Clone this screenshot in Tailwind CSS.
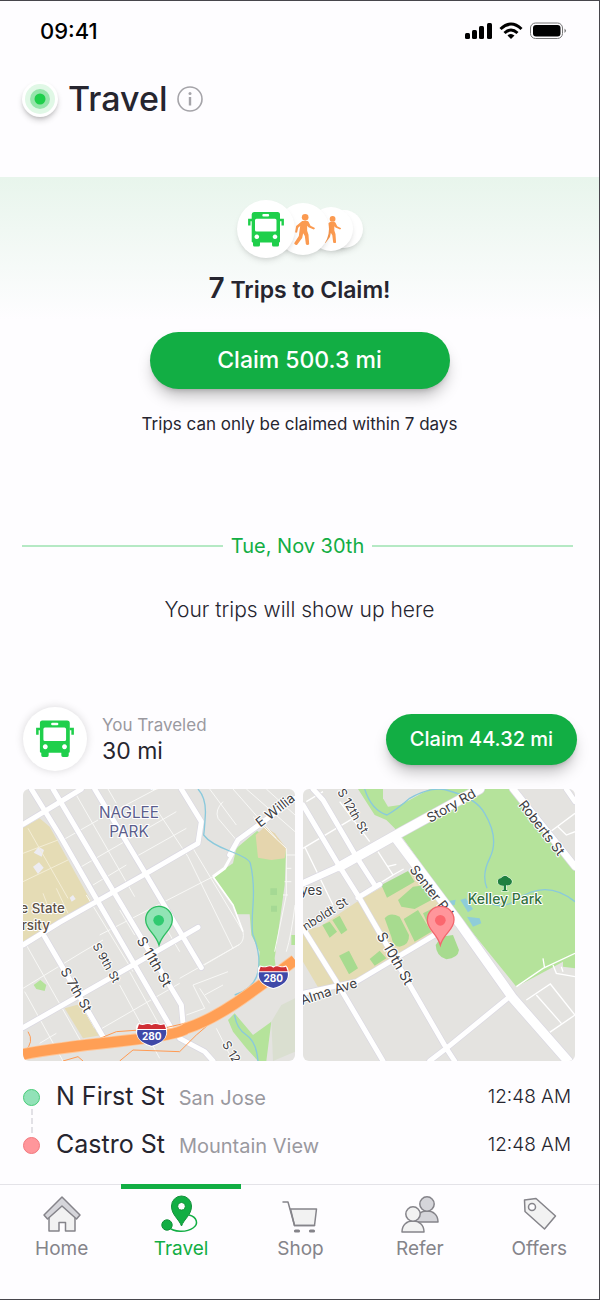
<!DOCTYPE html>
<html lang="en">
<head>
  <meta charset="UTF-8">
  <meta name="viewport" content="width=device-width, initial-scale=1.0">
  <title>Travel</title>
  <script src="https://cdn.jsdelivr.net/npm/@tailwindcss/browser@4"></script>
</head>
<body class="bg-[#fefdff] text-[#26252f] font-['Inter',sans-serif]">

  <!-- Shared icons -->
  <svg class="hidden" aria-hidden="true">
    <symbol id="bus" viewBox="0 0 36 35">
      <path fill="#1fcf4b" fill-rule="evenodd" d="M6 0h23.500q2.500 0 2.500 2.500V29.500q0 1-1 1v2.500q0 1.500-1.500 1.500h-4q-1.500 0-1.500-1.500v-2.500H12v2.500q0 1.500-1.500 1.500h-4q-1.500 0-1.500-1.500v-2.500q-1.300 0-1.300-1V2.500Q3.700 0 6 0ZM8.500 6.700Q7 6.700 7 8.200V18q0 1.500 1.500 1.500h18.500q1.500 0 1.500-1.500V8.200q0-1.500-1.500-1.500ZM15.500 2a1 1 0 0 0 0 2.400h4.500a1 1 0 0 0 0-2.400ZM8.800 22.500a2.300 2.300 0 1 0 .01 0ZM27 22.500a2.300 2.300 0 1 0 .01 0Z"/>
      <path fill="none" stroke="#1fcf4b" stroke-width="2.400" d="M4 8H1.300V13.500M31.800 8h2.900V13.500"/>
    </symbol>
    <symbol id="walk" viewBox="0 0 62 93">
      <circle cx="33" cy="10" r="10" fill="#fb9a50"/>
      <path fill="#fb9a50" d="M24 21h15q3 0 5 4l5 10 12 6q2 2 0 4t-4 1l-14-6-4-5v15l4 12 2 28q-1 3-5 3t-5-3l-3-24-5-8-3 14-15 20q-4 2-7-1t-1-5l13-20 4-30-6 5-3 14q-2 2-4 1t-2-3l3-17Z"/>
    </symbol>
    <symbol id="shield" viewBox="0 0 96 72">
      <path fill="#fff" d="M8 0q12 6 22 1 10-4 18 2 10-6 18-2 10 5 20-1l6 8q4 14 2 26Q88 60 48 72 8 60 2 34 0 22 2 8Z"/>
      <path fill="#cf2f35" d="M10 4q12 4 20 0 10-3 18 3 8-6 18-3 8 4 20 0l5 14H5Z"/>
      <path fill="#3f49a8" d="M5 21h86q6 34-43 47Q-1 55 5 21Z"/>
      <text x="48" y="51" text-anchor="middle" font-size="30" font-weight="700" fill="#fff">280</text>
    </symbol>
  </svg>

  <div class="min-h-screen flex flex-col border-t border-r border-b border-[#47464c]">

    <!-- Status bar -->
    <div class="h-15 pl-10 pr-8 flex items-center justify-between text-black">
      <span class="text-[22px] font-medium">09:41</span>
      <svg class="w-[103px] h-5" viewBox="0 0 103 20" aria-hidden="true">
        <rect x="1" y="12" width="5" height="6" rx="1.500"/>
        <rect x="8" y="9" width="5" height="9" rx="1.500"/>
        <rect x="15" y="5" width="5" height="13" rx="1.500"/>
        <rect x="23" y="2" width="5" height="16" rx="1.500"/>
        <g fill="none" stroke="#000" stroke-width="3">
          <path d="M36.500 8Q47-2 57.500 8"/>
          <path d="M40.500 12Q47 6 53.500 12"/>
        </g>
        <path d="M43.500 14.500Q47 11.500 50.500 14.500L47 18Z"/>
        <rect x="66.500" y="2" width="32" height="15.500" rx="5" fill="none" stroke="#777"/>
        <rect x="69" y="4" width="27.500" height="11.500" rx="3"/>
        <path d="M100.500 7.500q3 2.300 0 4.500Z" fill="#777"/>
      </svg>
    </div>

    <!-- Title -->
    <header class="h-[116px] pt-3 pl-[22px] flex items-start">
      <div class="flex items-center gap-2.5">
        <span class="size-9 rounded-full bg-white shadow-md shadow-black/20 grid place-items-center">
          <svg class="size-8" viewBox="0 0 32 32" aria-hidden="true">
            <circle cx="16" cy="16" r="15" fill="#e0f8e6"/>
            <circle cx="16" cy="16" r="10" fill="#96e5ab"/>
            <circle cx="16" cy="16" r="5.500" fill="#1fcf4b"/>
          </svg>
        </span>
        <h1 class="text-[34px] leading-[52px] font-medium">Travel</h1>
        <button type="button" aria-label="Information">
          <svg class="size-[26px]" viewBox="0 0 26 26" fill="none" stroke="#a5a4a9" stroke-width="1.600">
            <circle cx="13" cy="13" r="12"/>
            <path stroke-width="2.400" d="M13 11v8.500"/>
            <circle cx="13" cy="7.500" r="1.500" fill="#a5a4a9" stroke="none"/>
          </svg>
        </button>
      </div>
    </header>

    <!-- Trips to claim -->
    <section class="flex flex-col items-center">
      <div class="w-full h-[143px] pt-[23px] bg-linear-to-b from-[#e8f5ec] to-[#fefdff] flex flex-col items-center">
        <div class="flex items-center">
          <span class="relative z-30 size-[58px] rounded-full bg-white shadow-md grid place-items-center">
            <svg class="w-9 h-[35px]" aria-label="Bus"><use href="#bus"/></svg>
          </span>
          <span class="relative z-20 size-[52px] -ml-[18px] pl-1 rounded-full bg-white shadow-md grid place-items-center">
            <svg class="w-[21px] h-[31px]" aria-label="Walk"><use href="#walk"/></svg>
          </span>
          <span class="relative z-10 size-11 -ml-5 pl-0.5 rounded-full bg-white shadow-md grid place-items-center">
            <svg class="w-[18px] h-[27px]" aria-label="Walk"><use href="#walk"/></svg>
          </span>
          <span class="size-[38px] -ml-7 rounded-full bg-white shadow-md"></span>
        </div>
        <h2 class="mt-3 text-[23px] leading-9 font-semibold"><span class="text-[28px]">7</span> Trips to Claim!</h2>
      </div>
      <button type="button" class="mt-3 w-[300px] h-[57px] rounded-full bg-[#12ae44] text-white text-[23px] font-medium shadow-lg shadow-black/25">Claim 500.3 mi</button>
      <p class="mt-[23px] text-[17px] leading-6">Trips can only be claimed within 7 days</p>
    </section>

    <!-- Day -->
    <section class="mt-24 px-[22px]">
      <div class="flex items-center gap-2 pr-1">
        <span class="h-0.5 grow bg-[#b5e9c4]"></span>
        <h2 class="text-xl leading-7 text-[#12ae44]">Tue, Nov 30th</h2>
        <span class="h-0.5 grow bg-[#b5e9c4]"></span>
      </div>
      <p class="mt-9 text-[21px] leading-7 font-light text-center">Your trips will show up here</p>
    </section>

    <!-- Trip -->
    <article class="mt-[83px] pl-[23px] pr-6">
      <div class="flex items-center -mr-0.5">
        <span class="size-16 rounded-full bg-white shadow-[0_0_8px_rgba(0,0,0,0.15)] grid place-items-center">
          <svg class="size-[38px]" aria-label="Bus"><use href="#bus"/></svg>
        </span>
        <div class="ml-[15px]">
          <p class="text-[17px] leading-6 text-[#9a999f]">You Traveled</p>
          <p class="text-[23px] leading-7">30 mi</p>
        </div>
        <button type="button" class="ml-auto w-[191px] h-[51px] rounded-full bg-[#12ae44] text-white text-xl font-medium shadow-lg shadow-black/25">Claim 44.32 mi</button>
      </div>

      <div class="mt-[18px] grid grid-cols-2 gap-2">
        <!-- Start of the trip -->
        <svg class="w-full aspect-square rounded-md bg-[#e4e3e0]" viewBox="10 12 816 816" role="img" aria-label="Map of N First St" font-family="Inter, sans-serif">
          <path fill="#e5dcb5" d="M10 128 60 100 90 125 215 350 120 412 10 474ZM135 670 190 655 248 750 190 760Z"/>
          <path fill="#b5e39b" d="M580 275 640 235 650 190 712 138 735 150 800 195 795 300 765 520 768 545 715 550 720 500 695 450 690 388H652L630 345ZM625 705 645 685 700 750 755 710 740 828H715L680 790 640 740ZM42 600 62 585 80 600 75 618 50 612ZM815 450h12v30h-12Z"/>
          <path fill="#dadfd0" d="M755 710 785 660 826 640V800L760 828Z"/>
          <path fill="#a5d994" d="M752 310h20v20h-20ZM754 362h18v18h-18Z"/>
          <path fill="#e5d5ad" d="M708 150 735 125 765 145 800 190 795 220 755 225 715 218Z"/>
          <path fill="#edecf2" d="M42 203 57 185 73 195 66 215ZM40 245 58 232 72 248 55 267ZM150 338 160 330 168 342 156 350Z"/>
          <g fill="none" stroke="#f3edd6" stroke-width="3">
            <path d="M25 130 145 340M10 205 115 165M10 290 145 225M95 390 70 325M145 385 110 310"/>
          </g>
          <g fill="none" stroke="#f8f8f6" stroke-width="3">
            <path d="M170 30 345 335M265 12 290 55M415 80 505 215 640 490M520 190 670 440Q675 465 660 478L540 548M130 165 235 105M300 70 410 12M185 245 470 80M340 220 500 130M220 300 320 240M240 450 580 275M300 375 345 450M405 370 480 500M200 330 340 560M100 510 225 730M10 610 190 500 250 465M20 480 190 780M15 620 130 828M60 775 110 745M230 740 480 595M330 560 430 740M300 600 420 820M420 340 540 548M480 580 660 478M570 12 650 120M640 12 770 160M610 50Q585 75 595 100L650 165M680 12 826 140M740 12 826 90M700 95 800 190V330L765 500M800 210h26M800 250h15M795 290h20M790 330h15M800 500Q815 450 826 360M500 690 555 670 520 600 625 560M540 610 570 655M555 630 610 600M590 730 640 828"/>
          </g>
          <path fill="none" stroke="#dad8e2" stroke-linecap="round" stroke-linejoin="round" stroke-width="19" d="M35 12 120 150 235 350 455 730M100 12 270 300 485 660 490 715M225 12 380 270 545 548M485 12 545 110 535 175 375 268 120 412 10 480M10 728 340 540 535 427M10 118 60 88 185 12M75 455 250 755M630 210 655 165 826 40M480 760 555 800 580 828"/>
          <path fill="none" stroke="#fff" stroke-linecap="round" stroke-linejoin="round" stroke-width="15" d="M35 12 120 150 235 350 455 730M100 12 270 300 485 660 490 715M225 12 380 270 545 548M485 12 545 110 535 175 375 268 120 412 10 480M10 728 340 540 535 427M10 118 60 88 185 12M75 455 250 755M630 210 655 165 826 40M480 760 555 800 580 828"/>
          <path fill="none" stroke="#fff" stroke-width="9" d="M580 275 615 250 640 205"/>
          <path fill="none" stroke="#fff" stroke-width="5" d="M580 275 640 360 670 440"/>
          <path fill="none" stroke="#8ac9dc" stroke-width="4" d="M535 12Q560 40 557 90T552 150Q570 175 630 198T692 235Q705 290 700 360T700 450Q725 510 715 560T645 630M645 690Q650 730 680 750T715 828"/>
          <g fill="none">
            <path stroke="#ff9a52" stroke-width="3" d="M25 740Q45 770 15 800M180 785 290 740 430 730 560 700M300 828 340 795 480 800 530 750 600 690M130 828 175 815 190 828"/>
            <path stroke="#ffc596" stroke-width="36" d="M10 808Q100 790 290 770T500 730Q580 705 690 625T826 525"/>
            <path stroke="#ff9f55" stroke-width="31" d="M10 808Q100 790 290 770T500 730Q580 705 690 625T826 525"/>
          </g>
          <use href="#shield" x="348" y="714" width="96" height="72"/>
          <use href="#shield" x="713" y="541" width="96" height="72"/>
          <g paint-order="stroke" stroke="#fff" stroke-width="6" stroke-linejoin="round">
            <g fill="#5b5e8c" font-size="46" text-anchor="middle">
              <text x="328" y="98">NAGLEE</text>
              <text x="328" y="155">PARK</text>
            </g>
            <g fill="#5e5146" font-size="40" font-weight="500">
              <text x="2" y="384">e State</text>
              <text x="6" y="435">rsity</text>
            </g>
            <g fill="#3d3d42" font-size="40">
              <text transform="translate(722 128) rotate(-38)">E Willia</text>
              <text transform="translate(350 466) rotate(60)" font-size="42">S 11th St</text>
              <text transform="translate(218 482) rotate(61)" font-size="35">S 9th St</text>
              <text transform="translate(121 558) rotate(60)">S 7th St</text>
              <text transform="translate(606 778) rotate(58)" font-size="36">S 12</text>
              <text transform="translate(398 2) rotate(58)" font-size="34">y</text>
            </g>
          </g>
          <path fill="#91e4b5" stroke="#2fbd62" stroke-width="4" d="M418 480C408 445 378 435 378 404a40 40 0 0 1 80 0C458 435 428 445 418 480Z"/>
          <circle cx="417" cy="406" r="16" fill="#2fca70"/>
        </svg>

        <!-- End of the trip -->
        <svg class="w-full aspect-square rounded-md bg-[#e4e3e0]" viewBox="10 12 816 816" role="img" aria-label="Map of Castro St" font-family="Inter, sans-serif">
          <path fill="#e5dcb5" d="M190 338 340 255 430 350 440 430 150 600 60 615 10 530V438L60 425Z"/>
          <path fill="#b5e39b" d="M175 12H630L826 240V550L790 545V530L650 605 480 395 310 160 285 130 260 105 225 90Z"/>
          <path fill="#e4e3e0" d="M250 12H390L330 45 300 60 265 65 250 40Z"/>
          <path fill="#a7db8f" d="M245 300 325 258 345 290 262 338ZM295 345 340 305 380 300 395 345 345 372 305 365ZM312 402 355 375 395 440 345 470ZM255 400Q270 380 300 395L328 450Q330 480 300 485 280 485 275 455ZM370 385 400 370 415 400 385 420ZM68 420 90 410 112 440 90 458ZM98 405 120 392 143 435 125 448ZM118 512 148 497 175 550 148 568ZM210 522 240 497 260 520 225 542ZM408 480 425 455 460 450 478 495Q475 520 440 523 410 515 408 480Z"/>
          <path fill="#8fcdd9" d="M482 345 498 340 520 372 505 382ZM502 395 540 400 545 415 520 425ZM448 348 468 344 465 360 450 362Z"/>
          <g fill="none" stroke="#fff" stroke-width="4">
            <path d="M10 190 160 100M120 50 210 170M15 185 100 360M235 200 280 270 240 295M262 245 290 238M280 270 312 252M650 605 730 550 826 505M730 520 735 550M760 540 770 565 826 575M785 545 790 560M680 645 752 597 826 690 750 742M710 630 785 715M755 138 826 85M775 125 800 150 826 140M20 50 70 20"/>
          </g>
          <path fill="none" stroke="#8ac9dc" stroke-width="4" d="M195 12Q215 75 262 90 290 75 330 40 400 0 450 18 530 40 555 85 600 160 570 220 545 270 562 310M560 350Q610 375 650 345 740 280 826 350"/>
          <g fill="none" stroke="#dad8e2" stroke-linecap="round" stroke-linejoin="round">
            <path stroke-width="19" d="M10 60 120 245 180 340 440 790 465 828M40 12 70 45 170 215 225 300M175 338 240 298M10 430 110 590 250 828M10 625 170 590 430 435M390 828 440 790 630 635M800 12 826 50"/>
            <path stroke-width="24" d="M10 295 120 245M640 12 826 245"/>
            <path stroke-width="32" d="M120 245 280 155 540 12M285 155 480 415 640 640 805 828"/>
          </g>
          <g fill="none" stroke="#fff" stroke-linecap="round" stroke-linejoin="round">
            <path stroke-width="15" d="M10 60 120 245 180 340 440 790 465 828M40 12 70 45 170 215 225 300M175 338 240 298M10 430 110 590 250 828M10 625 170 590 430 435M390 828 440 790 630 635M800 12 826 50"/>
            <path stroke-width="20" d="M10 295 120 245M640 12 826 245"/>
            <path stroke-width="28" d="M120 245 280 155 540 12M285 155 480 415 640 640 805 828"/>
          </g>
          <g paint-order="stroke" stroke="#fff" stroke-width="6" stroke-linejoin="round" fill="#3d3d42" font-size="40">
            <text transform="translate(392 114) rotate(-30)">Story Rd</text>
            <text transform="translate(112 20) rotate(60)" font-size="36">S 12th St</text>
            <text transform="translate(655 60) rotate(52)">Roberts St</text>
            <text transform="translate(328 254) rotate(52)">Senter Rd</text>
            <text transform="translate(230 452) rotate(60)" font-size="42">S 10th St</text>
            <text x="2" y="330">yes</text>
            <text transform="translate(18 438) rotate(-32)" font-size="36">nboldt St</text>
            <text transform="translate(8 660) rotate(-18)">Alma Ave</text>
            <text x="616" y="356" text-anchor="middle" fill="#33713e" font-weight="500" font-size="42">Kelley Park</text>
          </g>
          <g fill="#1f8040" stroke="#fff" stroke-width="3" paint-order="stroke">
            <path d="M612 288h7v26l7 4h-21l7-4ZM596 296q-5-14 7-16 12-14 24-2 14 6 8 18-8 8-18 4-12 6-21-4Z"/>
          </g>
          <path fill="#ff969b" stroke="#f2666d" stroke-width="4" d="M422 480C412 445 383 435 383 404a40 40 0 0 1 80 0C463 435 432 445 422 480Z"/>
          <circle cx="422" cy="406" r="16" fill="#fb676e"/>
        </svg>
      </div>

      <!-- Stops -->
      <ol class="mt-3 pr-1">
        <li class="h-12 flex items-center relative">
          <span class="size-[17px] rounded-full border border-[#48cc78] bg-[#92e2b8]"></span>
          <span class="absolute left-2 top-9 h-6 border-l-2 border-dashed border-[#e2e1e6]"></span>
          <p class="ml-4 flex items-baseline gap-3.5">
            <span class="text-[25px]">N First St</span>
            <span class="text-xl text-[#9a999f]">San Jose</span>
          </p>
          <time class="ml-auto text-[19px] font-light">12:48 AM</time>
        </li>
        <li class="h-12 flex items-center">
          <span class="size-[17px] rounded-full border border-[#f2787e] bg-[#ff969b]"></span>
          <p class="ml-4 flex items-baseline gap-3.5">
            <span class="text-[25px]">Castro St</span>
            <span class="text-xl text-[#9a999f]">Mountain View</span>
          </p>
          <time class="ml-auto text-[19px] font-light">12:48 AM</time>
        </li>
      </ol>
    </article>

    <!-- Tab bar -->
    <nav class="mt-auto h-[115px] pl-0.5 border-t border-[#e4e3e8] grid grid-cols-5 text-[19px] leading-6 text-[#85848a]">
      <a href="#" class="pt-2.5 flex flex-col items-center gap-1">
        <svg class="w-10 h-[38px]" viewBox="0 0 40 38" fill="#f2f2f2" stroke="#85848a" stroke-width="1.500" stroke-linejoin="round" aria-hidden="true">
          <path d="M7 18 20 8 33 18V36H23.500V27.500H17V36H7Z"/>
          <path fill="#d5d5da" d="M20 2 38 20 34.500 24 20 11 5.500 24 2 20Z"/>
        </svg>
        Home
      </a>
      <a href="#" aria-current="page" class="-mt-px pt-1.5 border-t-5 border-[#12ae44] text-[#12ae44] flex flex-col items-center gap-1">
        <svg class="w-10 h-[38px]" viewBox="0 0 40 38" fill="#12ae44" stroke="#12903a" aria-hidden="true">
          <path fill="none" stroke="#12ae44" stroke-width="1.500" d="M28 20C36 22 38 29 32 33 26 37.500 12 37.500 8 32"/>
          <circle cx="6" cy="30" r="5.200"/>
          <path fill-rule="evenodd" d="M20.500 31C18 24 10.500 20 10.500 11a10 10 0 0 1 20 0C30.500 20 23 24 20.500 31ZM20.500 7.500a3.800 3.800 0 1 0 .01 0Z"/>
        </svg>
        Travel
      </a>
      <a href="#" class="pt-2.5 flex flex-col items-center gap-1">
        <svg class="w-10 h-[38px]" viewBox="0 0 40 38" fill="none" stroke="#85848a" stroke-width="1.500" stroke-linejoin="round" stroke-linecap="round" aria-hidden="true">
          <path fill="#f2f2f2" d="M10.500 14H36.500L34.500 30.500H14.500Z"/>
          <path d="M3 7H8L14.500 30.500H34.500"/>
          <path stroke-width="3.200" d="M15.500 36h3M30.500 36h3"/>
        </svg>
        Shop
      </a>
      <a href="#" class="pt-2.5 flex flex-col items-center gap-1">
        <svg class="w-10 h-[38px]" viewBox="0 0 40 38" fill="#f2f2f2" stroke="#85848a" stroke-width="1.500" stroke-linejoin="round" aria-hidden="true">
          <g fill="#d5d5da">
            <path d="M16 27C16 19.500 21 16 27 16S38 19.500 38 27Z"/>
            <circle cx="27" cy="9" r="7.200"/>
          </g>
          <path d="M2 37C2 29.500 7 26 13 26S24 29.500 24 37Z"/>
          <circle cx="13" cy="19" r="7.200"/>
        </svg>
        Refer
      </a>
      <a href="#" class="pt-2.5 flex flex-col items-center gap-1">
        <svg class="w-10 h-[38px]" viewBox="0 0 40 38" fill="#f2f2f2" stroke="#85848a" stroke-width="1.500" stroke-linejoin="round" aria-hidden="true">
          <path d="M5.500 5 17 3.500 36.500 21 25.500 34 6 16.500Z"/>
          <circle cx="13" cy="12" r="3.500" fill="#fefdff"/>
        </svg>
        Offers
      </a>
    </nav>
  </div>
</body>
</html>
